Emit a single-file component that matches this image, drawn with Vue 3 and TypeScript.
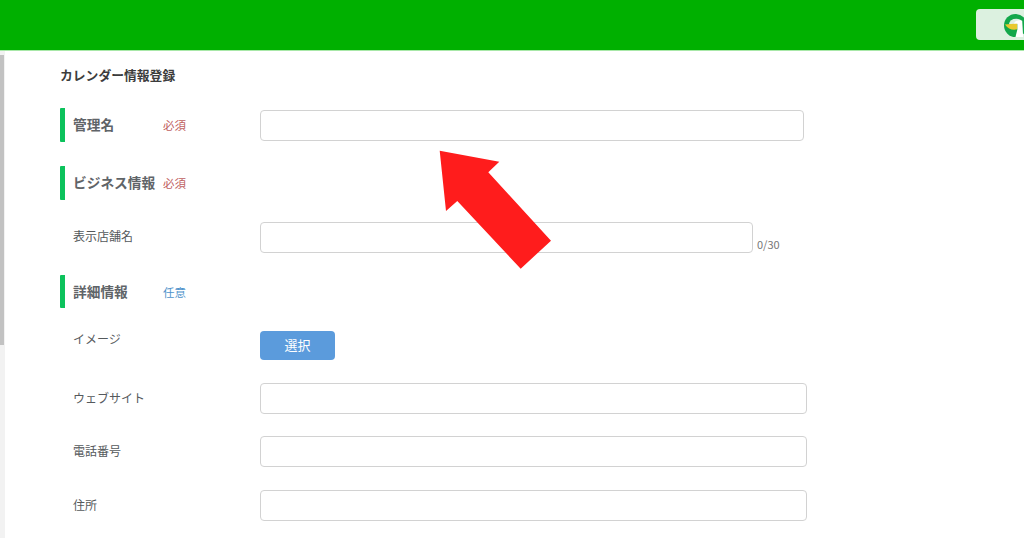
<script setup lang="ts">
interface Field { label: string; spaced: boolean; }
const fields: Field[] = [
  { label: 'ウェブサイト', spaced: true },
  { label: '電話番号', spaced: false },
  { label: '住所', spaced: true },
];
</script>

<template>
  <div class="page">
    <header class="topbar">
      <div class="account">
        <svg class="logo" width="23" height="23" viewBox="0 0 24 24">
          <circle cx="12" cy="12" r="12" fill="#12a84a" />
          <path d="M5 11 Q6 5 13 5 Q17 5 19 8 L13 11Z" fill="#dff1e3" />
          <path d="M1 11 L14 10 L14 16 Q6 18 1 11Z" fill="#e9c92e" />
          <path d="M10 10 Q14 5 19 7 L20 24 L12 24 L14 16 L14 10Z" fill="#fff" />
        </svg>
      </div>
    </header>
    <div class="body">
      <div class="track"><div class="thumb"></div></div>
      <main class="content">
        <h1 class="title">カレンダー情報登録</h1>
        <div class="rows">
          <div class="row head">
            <span class="head-name">管理名</span><span class="tag req">必須</span>
            <input class="input first" type="text" />
          </div>
          <div class="row head second">
            <span class="head-name">ビジネス情報</span><span class="tag req">必須</span>
          </div>
          <div class="row field shop">
            <span class="field-name">表示店舗名</span>
            <input class="input short" type="text" />
            <span class="count">0/30</span>
          </div>
          <div class="row head third">
            <span class="head-name">詳細情報</span><span class="tag opt">任意</span>
          </div>
          <div class="row field image">
            <span class="field-name">イメージ</span>
            <button class="pick" type="button">選択</button>
          </div>
          <div v-for="f in fields" :key="f.label" class="row field" :class="{ spaced: f.spaced }">
            <span class="field-name">{{ f.label }}</span>
            <input class="input wide" type="text" />
          </div>
        </div>
      </main>
    </div>
    <svg class="arrow" width="120" height="125" viewBox="436 148 120 125">
      <polygon
        points="439.7,150.7 499.3,161.7 488.3,172.3 551,240.7 520.7,268.7 457.3,201 446,211"
        fill="#ff1c1c"
      />
    </svg>
  </div>
</template>

<style>
html, body { margin: 0; background: #fff; }
</style>

<style scoped>
.page {
  position: relative;
  width: 1024px;
  height: 538px;
  overflow: hidden;
  background: #fff;
  font-family: "Noto Sans CJK JP", "Noto Sans", sans-serif;
}
.topbar {
  height: 50px;
  background: #00b000;
  border-bottom: 1px solid #a8e8a8;
  display: flex;
  justify-content: flex-end;
  align-items: flex-start;
}
.account {
  width: 48px;
  height: 31px;
  margin-top: 9px;
  background: #dcf1e0;
  border-radius: 4px 0 0 4px;
  display: flex;
  align-items: center;
  padding-left: 28px;
  box-sizing: border-box;
}
.logo { flex: none; margin-top: 2px; }
.body {
  display: flex;
  height: 487px;
}
.track {
  width: 5px;
  background: #f2f2f2;
  flex: none;
}
.thumb {
  width: 4px;
  height: 290px;
  margin-top: 4px;
  background: #c2c2c2;
}
.content {
  flex: 1;
  padding-left: 55px;
}
.title {
  margin: 0;
  height: 57px;
  padding-top: 15px;
  box-sizing: border-box;
  font-size: 12.8px;
  line-height: 17px;
  font-weight: 700;
  color: #3c3c3c;
}
.rows {
  display: flex;
  flex-direction: column;
  gap: 22px;
}
.row {
  display: flex;
  align-items: center;
}
.head {
  height: 34px;
  border-left: 5px solid #0cc25c;
  border-radius: 1px;
  padding-left: 8px;
}
.second { margin-top: 2px; }
.third { height: 33px; }
.head-name {
  width: 90px;
  flex: none;
  font-size: 13.7px;
  line-height: 20px;
  font-weight: 700;
  color: #5f6468;
  white-space: nowrap;
  position: relative;
  top: -1px;
}
.tag {
  width: 97px;
  flex: none;
  font-size: 11.5px;
  line-height: 16px;
}
.req { color: #c0605f; }
.opt { color: #4f93cb; }
.input {
  display: block;
  box-sizing: border-box;
  height: 31px;
  margin: 0;
  padding: 0 8px;
  background: #fff;
  border: 1px solid #d2d2d2;
  border-radius: 4px;
  outline: none;
}
.first { width: 544px; }
.short { width: 493px; }
.wide { width: 547px; }
.field {
  padding-left: 13px;
  height: 31px;
}
.spaced { margin-top: 1px; }
.field-name {
  width: 187px;
  flex: none;
  font-size: 12px;
  line-height: 17px;
  color: #55595c;
  position: relative;
  top: -1px;
}
.shop .field-name { top: -2px; }
.count {
  align-self: flex-end;
  font-size: 11px;
  color: #777;
  margin-left: 4px;
  line-height: 14px;
  margin-bottom: 2px;
}
.image {
  height: 29px;
  margin-top: 1px;
  align-items: flex-start;
}
.pick {
  width: 75px;
  height: 29px;
  padding: 0 0 2px;
  border: 0;
  border-radius: 4px;
  background: #5b9bdc;
  color: #fff;
  font: 13px "Noto Sans CJK JP", sans-serif;
}
.arrow {
  position: absolute;
  left: 436px;
  top: 148px;
}
</style>
